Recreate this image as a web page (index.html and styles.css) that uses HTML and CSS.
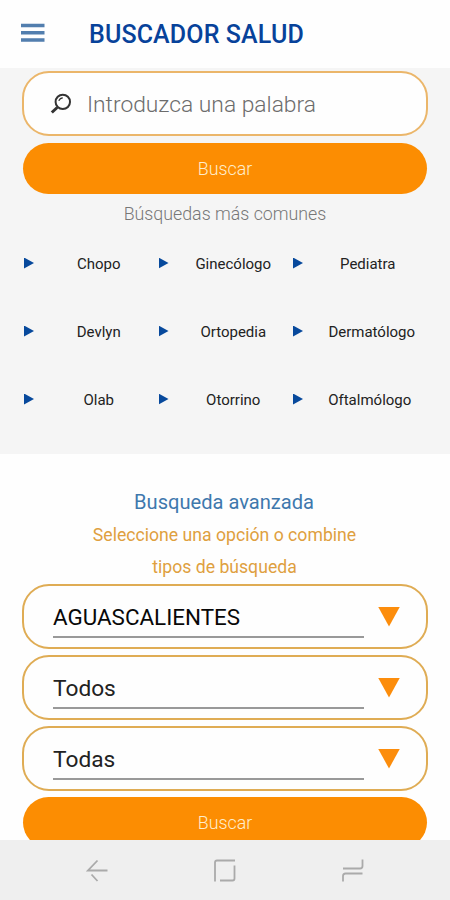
FILE: index.html
```html
<!DOCTYPE html>
<html lang="es">
<head>
<meta charset="utf-8">
<title>Buscador Salud</title>
<link rel="stylesheet" href="styles.css">
</head>
<body>
<div class="app">
  <header class="topbar">
    <svg class="menu" viewBox="0 0 24 20"><path d="M0 2.500h23.500M0 9.800h23.500M0 17h23.500"/></svg>
    <h1 class="title">BUSCADOR SALUD</h1>
  </header>
  <section class="search">
    <div class="field">
      <svg class="lens" viewBox="0 0 22 22"><circle cx="12.800" cy="8.900" r="7.200"/><path class="shine" d="M8.800 7.900q1.200-3 4-3"/><path class="handle" d="M7.200 14.500l-5.400 5"/></svg>
      <span class="placeholder">Introduzca una palabra</span>
    </div>
    <div class="button"><span>Buscar</span></div>
    <p class="common">Búsquedas más comunes</p>
    <div class="terms">
      <div class="term"><i class="play"></i><span>Chopo</span></div>
      <div class="term"><i class="play"></i><span>Ginecólogo</span></div>
      <div class="term"><i class="play"></i><span>Pediatra</span></div>
      <div class="term"><i class="play"></i><span>Devlyn</span></div>
      <div class="term"><i class="play"></i><span>Ortopedia</span></div>
      <div class="term"><i class="play"></i><span class="long">Dermatólogo</span></div>
      <div class="term"><i class="play"></i><span>Olab</span></div>
      <div class="term"><i class="play"></i><span>Otorrino</span></div>
      <div class="term"><i class="play"></i><span class="long tight">Oftalmólogo</span></div>
    </div>
  </section>
  <section class="advanced">
    <h2 class="heading">Busqueda avanzada</h2>
    <p class="hint">Seleccione una opción o combine<br>tipos de búsqueda</p>
    <div class="field select"><span class="value state">AGUASCALIENTES</span><i class="down"></i></div>
    <div class="field select"><span class="value">Todos</span><i class="down"></i></div>
    <div class="field select"><span class="value">Todas</span><i class="down"></i></div>
    <div class="button last"><span>Buscar</span></div>
  </section>
  <nav class="navbar">
    <svg viewBox="0 0 24 24"><path d="M11.500 1.500L2 11.500h19.500M5.500 15.500l6 6.500"/></svg>
    <svg viewBox="0 0 24 24"><path d="M2 22.500V3.500q0-2 2-2H22M21.500 6.500V19.500q0 2-2 2H7"/></svg>
    <svg viewBox="0 0 24 24"><path d="M21.500 .5V7q0 2.500-2.500 2.500H2M21.500 14.500H4.500Q2 14.500 2 17V22.500"/></svg>
  </nav>
</div>
</body>
</html>
```
FILE: styles.css
```css
* { box-sizing: border-box; }
body { margin: 0; font-family: Roboto, sans-serif; background: #fefefe; }
h1, h2, p { margin: 0; font-weight: 400; }
.app { display: flex; flex-direction: column; width: 450px; height: 900px; overflow: hidden; }
.topbar { flex: none; height: 68px; display: flex; align-items: center; padding-left: 21px; background: #fefefe; }
.menu { width: 24px; height: 20px; margin-right: 44px; margin-top: -3px; fill: none; stroke: #527eae; stroke-width: 3.4; }
.title { margin-top: 1px; font-size: 25px; font-weight: 500; line-height: 30px; letter-spacing: .13px; color: #07429a; }
.search { flex: none; height: 386px; padding: 3px 22px 0; background: #f5f5f5; }
.field { display: flex; align-items: center; height: 65px; border: 2px solid #ebb66a; border-radius: 27px; background: #fefefe; }
.lens { width: 22px; height: 22px; margin-left: 26px; margin-right: 15px; fill: none; stroke: #333; stroke-width: 2; }
.lens .shine { stroke-width: 1.2; }
.lens .handle { stroke-width: 3; }
.placeholder { padding-top: 2px; font-size: 22.8px; font-weight: 300; color: #6c6c6c; white-space: nowrap; }
.button { display: flex; align-items: center; justify-content: center; height: 51px; margin: 7px 1px 0; border-radius: 26px; background: #fc8d02; color: #ffedcd; font-size: 17.8px; font-weight: 300; }
.last { margin-top: 6px; }
.common { margin-top: 9px; line-height: 22px; text-align: center; font-size: 17.8px; font-weight: 300; color: #777; }
.terms { display: grid; grid-template-columns: repeat(3, 134.5px); grid-auto-rows: 68px; margin-top: 4px; margin-left: 2px; }
.term { display: flex; align-items: center; font-size: 15px; color: #222; }
.term span { flex: 1; text-align: center; margin-left: 5px; padding-top: 1px; }
.term .long { margin-right: -8px; }
.term .tight { margin-right: -4px; }
.play { width: 10px; height: 11px; background: #07499c; clip-path: polygon(0 0, 100% 50%, 0 100%); }
.advanced { flex: 1; min-height: 0; overflow: hidden; padding: 32px 22px 0; }
.heading { line-height: 32px; text-align: center; font-size: 20.1px; margin-right: 2px; color: #3e78ad; }
.hint { padding-top: 2px; line-height: 31.500px; text-align: center; font-size: 17.65px; margin-right: 1px; color: #dfa03f; margin-bottom: 1px; }
.select { margin-bottom: 6px; height: 65px; border-color: #dfac54; }
.value { width: 311px; height: 42px; margin-left: 29px; margin-top: 1px; padding-top: 6px; line-height: 32px; border-bottom: 2px solid #999; font-size: 22.7px; color: #222; }
.state { padding-top: 5px; font-size: 22.4px; color: #080808; }
.down { width: 22px; height: 20px; margin-left: 14px; background: #fc8d0c; clip-path: polygon(0 0, 100% 0, 50% 100%); }
.navbar { flex: none; height: 60px; display: flex; justify-content: center; gap: 103.5px; align-items: center; padding-top: 1px; background: #efefef; }
.navbar svg { width: 24px; height: 24px; fill: none; stroke: #aaa; stroke-width: 1.8; }
```
